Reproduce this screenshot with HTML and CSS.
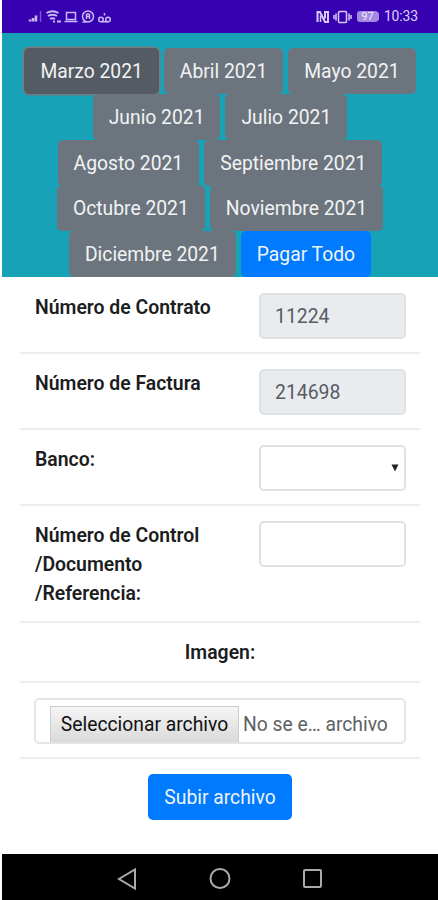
FILE: index.html
```html
<!DOCTYPE html>
<html lang="es">
<head>
<meta charset="utf-8">
<title>Subir archivo</title>
<link rel="stylesheet" href="styles.css">
</head>
<body>
<div class="phone">
  <header class="status">
    <svg class="status-left" width="86" height="18" viewBox="0 0 86 18" fill="none" stroke="#c9b8f4" stroke-width="1.5">
      <path d="M2 13.500v-2M5 13.500V10M8 13.500V7.500" stroke-width="2.600"/>
      <path d="M12.500 14V3" stroke="#7656d2" stroke-width="1.500"/>
      <path d="M18.500 5q6-3.500 12 0M20 8q4.500-2.500 9 0M22 11q2.500-1.500 5 0" stroke-width="2"/>
      <path d="M25 13.500h2M29 13.500h4" stroke-width="2"/>
      <path d="M38.500 4.500h9v7h-9zM36.500 13.500h13"/>
      <circle cx="60" cy="8.500" r="5.500"/><path d="M54.500 14h4M58.500 6v5M61.500 6v5M58.500 6h3M58.500 8.500h3"/>
      <circle cx="73" cy="11.500" r="2.300"/><circle cx="80" cy="11.500" r="2.300"/><path d="M73 13.800h7M76.500 5v2.500"/>
    </svg>
    <div class="status-right">
      <svg width="36" height="16" viewBox="0 0 36 16" fill="none" stroke="#d8caf8" stroke-width="1.500">
        <path d="M1.500 13V3H4l5 10h3V3H9v6.500" stroke-width="2"/><path d="M4.500 6.500V13"/>
        <rect x="22.500" y="2.500" width="8" height="11" rx="1"/>
        <path d="M20 4.500v7M33 4.500v7M18 6v4M35 6v4"/>
      </svg>
      <span class="battery">97</span>
      <span class="time">10:33</span>
    </div>
  </header>
  <nav class="months">
    <div class="line"><button class="btn active">Marzo 2021</button><button class="btn">Abril 2021</button><button class="btn">Mayo 2021</button></div>
    <div class="line"><button class="btn">Junio 2021</button><button class="btn">Julio 2021</button></div>
    <div class="line"><button class="btn">Agosto 2021</button><button class="btn">Septiembre 2021</button></div>
    <div class="line"><button class="btn">Octubre 2021</button><button class="btn">Noviembre 2021</button></div>
    <div class="line"><button class="btn">Diciembre 2021</button><button class="btn primary">Pagar Todo</button></div>
  </nav>
  <main class="form">
    <div class="row"><b class="label">Número de Contrato</b><div class="field disabled">11224</div></div>
    <div class="row"><b class="label">Número de Factura</b><div class="field disabled">214698</div></div>
    <div class="row"><b class="label">Banco:</b><div class="field select"><svg width="8" height="8" viewBox="0 0 8 8"><path d="M.5.5h7L4 7.500z" fill="#222"/></svg></div></div>
    <div class="row tall"><b class="label">Número de Control<br>/Documento<br>/Referencia:</b><div class="field"></div></div>
    <div class="row heading"><b>Imagen:</b></div>
    <div class="row"><div class="file"><span class="choose">Seleccionar archivo</span><span class="filename">No se e… archivo</span></div></div>
    <div class="row submit"><button class="btn primary">Subir archivo</button></div>
  </main>
  <footer class="navbar">
    <svg width="22" height="24" viewBox="0 0 22 24"><path d="M18 2.500v19L2 12z"/></svg>
    <svg width="22" height="24" viewBox="0 0 22 24"><circle cx="11" cy="11.500" r="9.500"/></svg>
    <svg width="22" height="24" viewBox="0 0 22 24"><rect x="3" y="3" width="17" height="17" rx="1"/></svg>
  </footer>
</div>
</body>
</html>
```
FILE: styles.css
```css
* { box-sizing: border-box; }
body { margin: 0; background: #fff; color: #1b1d20; font: 19.2px/29px Roboto, sans-serif; }
.phone { height: 900px; margin-left: 2px; display: flex; flex-direction: column; overflow: hidden; }
.status { height: 33px; flex: none; background: #3700b0; display: flex; justify-content: space-between; padding: 8px 20px 0 26px; }
.status-right { display: flex; height: 17px; align-items: center; color: #ded2fa; }
.battery { width: 21px; height: 11px; margin-left: 5px; border-radius: 3px; background: #a48be2; color: #efe9ff; font-size: 11px; line-height: 11px; text-align: center; box-shadow: 2px 0 0 -1px #a48be2; }
.time { margin-left: 6px; font-size: 13.9px; line-height: 17px; letter-spacing: -.1px; }
.months { height: 244px; flex: none; background: #17a2b8; padding: 15px 0 0; }
.line { height: 45.8px; display: flex; justify-content: center; gap: 5px; }
.btn { height: 46px; padding: 1px 16px 0; border: 0; border-radius: 5px; background: #6c757d; color: #f1f3f5; font: 19.3px/45px Roboto, sans-serif; white-space: nowrap; }
.active { background: #545b62; box-shadow: 0 0 0 1.500px #727c83; }
.primary { background: #007bff; }
.form { height: 577px; flex: none; width: 400px; margin-left: 18px; padding-top: .6px; }
.row { height: 76.2px; display: flex; justify-content: space-between; padding: 15px 14px 0; border-bottom: 2px solid #eceeef; }
.row b { font-weight: 600; font-size: 19.4px; }
.label { padding-left: 1px; }
.field { width: 147px; height: 46px; border: 2px solid #dfe2e5; border-radius: 5px; padding: 0 14px; font-size: 19.4px; line-height: 43px; color: #565c62; }
.disabled { background: #e9ecef; }
.select { display: flex; justify-content: flex-end; align-items: center; padding-right: 5px; }
.tall { height: 117px; }
.heading { height: 60px; justify-content: center; padding-top: 15px; }
.file { flex: 1; height: 46px; border: 2px solid #e3e5e7; border-radius: 5px; display: flex; padding: 6px 0 0 14px; overflow: hidden; white-space: nowrap; }
.choose { width: 189px; height: 38px; background: linear-gradient(#f5f5f5, #d9d9d9); border: 1px solid #ccc; line-height: 35px; text-align: center; color: #111; font-size: 19.3px; }
.filename { margin-left: 4px; line-height: 37px; font-size: 19.3px; color: #5c6166; }
.submit { border: 0; justify-content: center; }
.submit .btn { height: 46px; padding: 0 16.5px; }
.navbar { height: 46px; flex: none; background: #000; display: flex; justify-content: center; align-items: center; gap: 70px; padding: 3px 0 0; }
.navbar svg { fill: none; stroke: #aaa; stroke-width: 2; }
```
